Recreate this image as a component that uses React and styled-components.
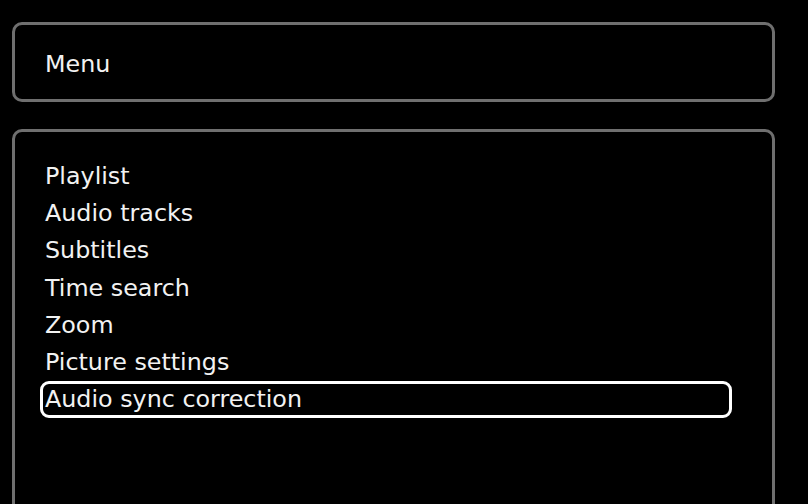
import React from 'react';
import styled, { createGlobalStyle } from 'styled-components';

const Global = createGlobalStyle`
  html, body {
    margin: 0;
    padding: 0;
    background: #000;
    overflow: hidden;
  }
  body {
    font-family: "DejaVu Sans", Verdana, sans-serif;
    color: #f2f2f2;
  }
`

const Screen = styled.div`
  width: 808px;
  height: 504px;
  box-sizing: border-box;
  padding: 22px 33px 0 12px;
  display: flex;
  flex-direction: column;
  gap: 27px;
  overflow: hidden;
`

const Panel = styled.div`
  border: 3px solid #6f6f6f;
  border-radius: 10px;
  box-sizing: border-box;
  flex-shrink: 0;
`

const Header = styled(Panel)`
  height: 80px;
  display: flex;
  align-items: center;
  padding: 3px 0 0 30px;
  font-size: 23.8px;
`

const Body = styled(Panel)`
  height: 420px;
  padding: 25px 40px 0 25px;
`

const List = styled.ul`
  list-style: none;
  margin: 0;
  padding: 0;
  display: flex;
  flex-direction: column;
`

const Item = styled.li`
  height: 37.3px;
  display: flex;
  align-items: center;
  font-size: 23.8px;
  box-sizing: border-box;
  border: 3px solid ${p => (p.$active ? '#fff' : 'transparent')};
  border-radius: 9px;
  padding-left: 2px;
  white-space: nowrap;
`

const items = [
  'Playlist',
  'Audio tracks',
  'Subtitles',
  'Time search',
  'Zoom',
  'Picture settings',
  'Audio sync correction',
];

export default function App() {
  return (
    <>
      <Global />
      <Screen>
        <Header>Menu</Header>
        <Body>
          <List>
            {items.map((t, i) => (
              <Item key={t} $active={i === items.length - 1}>{t}</Item>
            ))}
          </List>
        </Body>
      </Screen>
    </>
  )
}
